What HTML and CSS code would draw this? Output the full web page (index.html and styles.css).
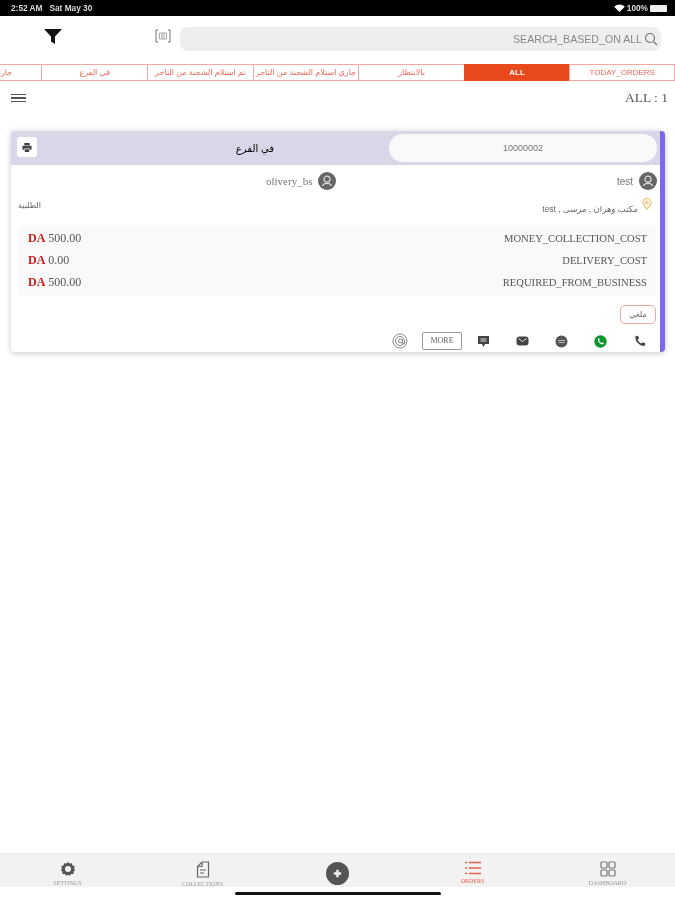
FILE: index.html
```html
<!DOCTYPE html>
<html>
	<head>
		<meta charset="utf-8">
		<title>Orders</title>
		<link rel="stylesheet" href="styles.css">
	</head>
	<body>
		<div class="StatusBar">
			<div class="StatusTime">2:52 AM&nbsp;&nbsp; Sat May 30</div>
			<div class="StatusRight">
				<svg width="11" height="8" viewBox="0 0 12 9"><path d="M0 3 A8.5 8.5 0 0 1 12 3 L6 9 Z" fill="#fff"/></svg>
				<span>100%</span>
				<span class="Battery"></span>
			</div>
		</div>

		<div class="Header">
			<svg class="FilterIcon" width="18" height="15" viewBox="0 0 18 15"><path d="M0 0 H18 L11 7.5 V15 L7 12.5 V7.5 Z" fill="#111"/></svg>
			<svg class="ScanIcon" width="16" height="14" viewBox="0 0 16 14" fill="none" stroke="#777" stroke-width="1">
				<path d="M3 1 H1 V13 H3 M13 1 H15 V13 H13"/>
				<path d="M4.5 4 H11.5 V10 H4.5 Z M7 4 V10 M9 4 V10" stroke="#aaa"/>
			</svg>
			<div class="SearchBox">
				<span>SEARCH_BASED_ON ALL</span>
				<svg width="14" height="14" viewBox="0 0 14 14" fill="none" stroke="#777" stroke-width="1.2"><circle cx="6" cy="6" r="4.5"/><path d="M9.5 9.5 L13 13"/></svg>
			</div>
		</div>

		<div class="Tabs">
			<div class="Tab">TODAY_ORDERS</div>
			<div class="Tab TabActive">ALL</div>
			<div class="Tab">بالانتظار</div>
			<div class="Tab">جاري استلام الشحنة من التاجر</div>
			<div class="Tab">تم استلام الشحنة من التاجر</div>
			<div class="Tab">في الفرع</div>
			<div class="Tab">جاري التوصيل</div>
		</div>

		<div class="CountRow">
			<div class="Menu"><span></span><span></span><span></span></div>
			<div class="Count">ALL : 1</div>
		</div>

		<div class="Card">
			<div class="CardHead">
				<div class="PrintBtn">
					<svg width="10" height="11" viewBox="0 0 11 11"><path d="M2.5 0.5 H8.5 V3 H2.5 Z M0.5 3.5 H10.5 V8 H8.5 V6.5 H2.5 V8 H0.5 Z M3 7.5 H8 V10.5 H3 Z" fill="#444"/></svg>
				</div>
				<div class="BranchName">في الفرع</div>
				<div class="OrderNo">10000002</div>
			</div>

			<div class="Parties">
				<div class="Party PartyLeft">
					<span>olivery_bs</span>
					<svg class="Avatar" width="18" height="18" viewBox="0 0 18 18"><circle cx="9" cy="9" r="9" fill="#666"/><circle cx="9" cy="7.2" r="3" fill="none" stroke="#ddd" stroke-width="1.2"/><path d="M4.5 14 C5.5 10.5 12.5 10.5 13.5 14" fill="none" stroke="#ddd" stroke-width="1.2"/></svg>
				</div>
				<div class="Party PartyRight">
					<span>test</span>
					<svg class="Avatar" width="18" height="18" viewBox="0 0 18 18"><circle cx="9" cy="9" r="9" fill="#666"/><circle cx="9" cy="7.2" r="3" fill="none" stroke="#ddd" stroke-width="1.2"/><path d="M4.5 14 C5.5 10.5 12.5 10.5 13.5 14" fill="none" stroke="#ddd" stroke-width="1.2"/></svg>
				</div>
			</div>

			<div class="Address">
				<span class="AddressType">الطلبية</span>
				<span class="AddressText">
					<span class="AddressLine" dir="rtl">مكتب وهران , مرسى , test</span>
					<svg class="Pin" width="10" height="12" viewBox="0 0 10 12" fill="none" stroke="#f5c26b" stroke-width="1.2"><path d="M5 11 C2 7.5 1 6 1 4.5 A4 4 0 0 1 9 4.5 C9 6 8 7.5 5 11 Z"/><circle cx="5" cy="4.5" r="1.2"/></svg>
				</span>
			</div>

			<div class="Costs">
				<div class="CostRow"><div class="Amount"><b>DA</b> 500.00</div><div>MONEY_COLLECTION_COST</div></div>
				<div class="CostRow"><div class="Amount"><b>DA</b> 0.00</div><div>DELIVERY_COST</div></div>
				<div class="CostRow"><div class="Amount"><b>DA</b> 500.00</div><div>REQUIRED_FROM_BUSINESS</div></div>
			</div>

			<div class="CancelRow"><div class="CancelBtn">ملغي</div></div>

			<div class="Actions">
				<svg width="16" height="16" viewBox="0 0 16 16" fill="none" stroke="#888" stroke-width="1"><circle cx="8" cy="8" r="7"/><circle cx="8" cy="8" r="4.5"/><circle cx="8.5" cy="8" r="2"/><path d="M10.5 6 V10 C10.5 11.5 13 11.5 13 9"/></svg>
				<div class="MoreBtn">MORE</div>
				<svg class="ActGap1" width="13" height="13" viewBox="0 0 13 13"><path d="M1 1 H12 V9 H8 L6.5 12 L5 9 H1 Z" fill="#444"/><path d="M3.5 4 H9.5 M3.5 6 H9.5" stroke="#ddd"/></svg>
				<svg class="ActGap2" width="13" height="10" viewBox="0 0 13 10"><rect x="0.5" y="0.5" width="12" height="9" rx="3" fill="#444"/><path d="M2.5 2.5 L6.5 5.5 L10.5 2.5" fill="none" stroke="#ddd"/></svg>
				<svg class="ActGap3" width="13" height="13" viewBox="0 0 13 13"><circle cx="6.5" cy="6.5" r="6" fill="#555"/><path d="M3 5.5 H10 M3.5 7.5 H9.5" stroke="#bbb"/></svg>
				<svg class="ActGap4" width="13" height="13" viewBox="0 0 13 13"><circle cx="6.5" cy="6.5" r="6.2" fill="#11932f"/><path d="M4 3.5 C3.5 6.5 6 9.5 9.3 9.5 L9.8 8 L8.2 7.2 L7.4 8 C6.4 7.6 5.4 6.6 5.1 5.6 L5.9 4.8 L5 3.2 Z" fill="#fff"/></svg>
				<svg class="ActGap5" width="12" height="12" viewBox="0 0 12 12"><path d="M1.5 1 L4 0.8 L5 3.6 L3.6 4.8 C4.4 6.6 5.6 7.8 7.4 8.6 L8.6 7.2 L11.2 8.2 L11 10.8 C5.5 11.5 0.8 6.5 1.5 1 Z" fill="#444"/></svg>
			</div>
		</div>

		<div class="Spacer"></div>

		<div class="BottomNav">
			<div class="NavItem">
				<svg width="16" height="16" viewBox="0 0 16 16"><path d="M8 1 L9.5 2.6 L11.8 2.2 L12.6 4.4 L14.8 5.2 L14 7.4 L15.2 9 L13.6 10.6 L13.6 13 L11.2 13 L9.6 14.8 L8 13.8 L6.4 14.8 L4.8 13 L2.4 13 L2.4 10.6 L0.8 9 L2 7.4 L1.2 5.2 L3.4 4.4 L4.2 2.2 L6.5 2.6 Z" fill="#555"/><circle cx="8" cy="8" r="3" fill="#f2f2f2"/></svg>
				<span>SETTINGS</span>
			</div>
			<div class="NavItem">
				<svg width="14" height="17" viewBox="0 0 14 17" fill="none" stroke="#666" stroke-width="1.2"><path d="M6 1 H12.5 V16 H1.5 V5.5 Z M6 1 V5.5 H1.5"/><path d="M4 9 H10 M4 12 H8"/></svg>
				<span>COLLECTIONS</span>
			</div>
			<div class="NavItem NavCenter">
				<svg width="23" height="23" viewBox="0 0 22 22"><circle cx="11" cy="11" r="11" fill="#555"/><path d="M11 7.5 V14.5 M7.5 11 H14.5" stroke="#eee" stroke-width="2.4"/></svg>
			</div>
			<div class="NavItem NavActive">
				<svg width="16" height="14" viewBox="0 0 16 14" fill="none" stroke="#e8604c" stroke-width="1.4"><path d="M4 1.5 H16 M4 7 H16 M4 12.5 H16 M0 1.5 H2 M0 7 H2 M0 12.5 H2"/></svg>
				<span>ORDERS</span>
			</div>
			<div class="NavItem">
				<svg width="16" height="16" viewBox="0 0 16 16" fill="none" stroke="#777" stroke-width="1.2"><rect x="1" y="1" width="6" height="6" rx="1"/><rect x="9" y="1" width="6" height="6" rx="1"/><rect x="1" y="9" width="6" height="6" rx="1"/><rect x="9" y="9" width="6" height="6" rx="1"/></svg>
				<span>DASHBOARD</span>
			</div>
		</div>
		<div class="HomeBar"><span></span></div>
	</body>
</html>
```

FILE: styles.css
```css
html, body {margin: 0; height: 100%; overflow: hidden; background-color: white;}

body {
	display: flex;
	flex-direction: column;
	height: 900px;
	font-family: "Liberation Sans", "DejaVu Sans", sans-serif;
	color: #555;
	filter: blur(0.6px); /* the reference is a soft, upscaled capture */
}

.StatusBar {
	height: 16px;
	background-color: black;
	color: #ddd;
	display: flex;
	justify-content: space-between;
	align-items: center;
	padding: 0 6px 0 11px;
	font-size: 8.3px;
	font-weight: bold;
}
.StatusRight {
	display: flex;
	align-items: center;
	gap: 2px;
}
.Battery {
	width: 17px;
	height: 7px;
	background-color: #eee;
	border-radius: 1px;
	margin-right: 2px;
}

.Header {
	height: 48px;
	display: flex;
	align-items: center;
	padding: 0 14px 3px 44px;
	box-sizing: border-box;
}
.FilterIcon {
	margin-top: -4px;
}
.ScanIcon {
	margin-left: 93px;
	margin-right: 9px;
	margin-top: -5px;
}
.SearchBox {
	flex: 1;
	height: 24px;
	margin-top: 1px;
	background-color: #eeeeee;
	border-radius: 8px;
	display: flex;
	justify-content: flex-end;
	align-items: center;
	gap: 2px;
	padding-right: 3px;
	font-size: 10.6px;
	color: #888;
}

.Tabs {
	display: flex;
	flex-direction: row-reverse;
	height: 17px;
	overflow: hidden;
}
.Tab {
	flex: 0 0 105.6px;
	box-sizing: border-box;
	border: 1px solid #f3a9a3;
	border-right: 0;
	color: #ea6a5a;
	font-size: 8px;
	line-height: 15px;
	text-align: center;
	white-space: nowrap;
	overflow: hidden;
}
.Tab:first-child {
	border-right: 1px solid #f3a9a3;
}
.TabActive {
	background-color: #e8491d;
	border-color: #e8491d;
	color: white;
	font-weight: bold;
}

.CountRow {
	display: flex;
	justify-content: space-between;
	align-items: center;
	height: 34px;
	padding: 0 7px 0 11px;
}
.Menu span {
	display: block;
	width: 15px;
	height: 1.5px;
	background-color: #555;
	margin: 2px 0;
}
.Count {
	font-family: "Liberation Serif", serif;
	font-size: 13.5px;
	color: #555;
}

.Card {
	margin: 16px 10px 0 11px;
	height: 221px;
	box-sizing: border-box;
	border-right: 5px solid #7b68ee;
	border-radius: 4px;
	box-shadow: 0 1px 6px rgba(0, 0, 0, 0.22);
	display: flex;
	flex-direction: column;
	background-color: white;
}
.CardHead {
	height: 34px;
	flex: none;
	background-color: #d9d6e8;
	display: flex;
	align-items: center;
	padding: 0 3px 0 6px;
	border-radius: 4px 0 0 0;
}
.PrintBtn {
	width: 20px;
	height: 20px;
	background-color: white;
	border-radius: 3px;
	display: flex;
	justify-content: center;
	align-items: center;
	margin-top: -2px;
}
.BranchName {
	flex: 1;
	text-align: center;
	font-size: 10px;
	color: #000;
	padding-left: 84px;
}
.OrderNo {
	width: 268px;
	height: 28px;
	background-color: #f9f9f9;
	border-radius: 14px;
	font-size: 9px;
	line-height: 28px;
	text-align: center;
	color: #777;
}

.Parties {
	display: flex;
	justify-content: space-between;
	padding: 7px 3px 0 255px;
	height: 18px;
}
.Party {
	display: flex;
	align-items: center;
	gap: 6px;
	font-size: 10px;
	color: #777;
}
.PartyLeft span {
	font-family: "Liberation Serif", serif;
	font-size: 11px;
}

.Address {
	display: flex;
	justify-content: space-between;
	align-items: flex-start;
	padding: 11px 8px 0 7px;
	height: 18px;
	font-size: 8px;
	color: #666;
}
.AddressText {
	display: flex;
	gap: 4px;
	align-items: flex-start;
}
.AddressLine {
	font-size: 8.5px;
	padding-top: 3px;
}
.Pin {
	margin-top: -3px;
}

.Costs {
	margin: 6px 4px 0 7px;
	height: 71px;
	padding: 2px 9px 0 10px;
	box-sizing: border-box;
	background-color: #f9f9f9;
	border-radius: 6px;
	font-family: "Liberation Serif", serif;
	font-size: 10.6px;
	color: #555;
}
.CostRow {
	display: flex;
	justify-content: space-between;
	align-items: center;
	height: 22px;
}
.Amount {
	font-size: 12px;
}
.CostRow b {
	color: #d21a1a;
}

.CancelRow {
	display: flex;
	justify-content: flex-end;
	padding: 9px 4px 0 0;
}
.CancelBtn {
	width: 36px;
	height: 19px;
	box-sizing: border-box;
	border: 1px solid #f0a8a0;
	border-radius: 5px;
	font-size: 8px;
	line-height: 17px;
	text-align: center;
	color: #666;
}

.Actions {
	display: flex;
	justify-content: flex-end;
	align-items: center;
	padding: 8px 14px 0 0;
}
.MoreBtn {
	width: 40px;
	height: 18px;
	box-sizing: border-box;
	border: 1px solid #999;
	border-radius: 2px;
	margin-left: 14px;
	font-family: "Liberation Serif", serif;
	font-size: 8px;
	line-height: 16px;
	text-align: center;
	color: #666;
}
.ActGap1 {margin-left: 15px;}
.ActGap2 {margin-left: 26px;}
.ActGap3 {margin-left: 26px;}
.ActGap4 {margin-left: 26px;}
.ActGap5 {margin-left: 27px;}

.Spacer {
	flex: 1;
}

.BottomNav {
	height: 34px;
	box-sizing: border-box;
	background-color: #f2f2f2;
	border-top: 1px solid #ececec;
	display: flex;
}
.NavItem {
	flex: 1;
	display: flex;
	flex-direction: column;
	align-items: center;
	padding-top: 7px;
	gap: 3px;
	font-family: "Liberation Serif", serif;
	font-size: 6px;
	color: #999;
	white-space: nowrap;
}
.NavCenter {
	padding-top: 8px;
}
.NavActive {
	color: #e8604c;
}

.HomeBar {
	height: 13px;
	display: flex;
	justify-content: center;
	padding-top: 5px;
	box-sizing: border-box;
}
.HomeBar span {
	width: 206px;
	height: 3px;
	background-color: #111;
	border-radius: 2px;
}
```
